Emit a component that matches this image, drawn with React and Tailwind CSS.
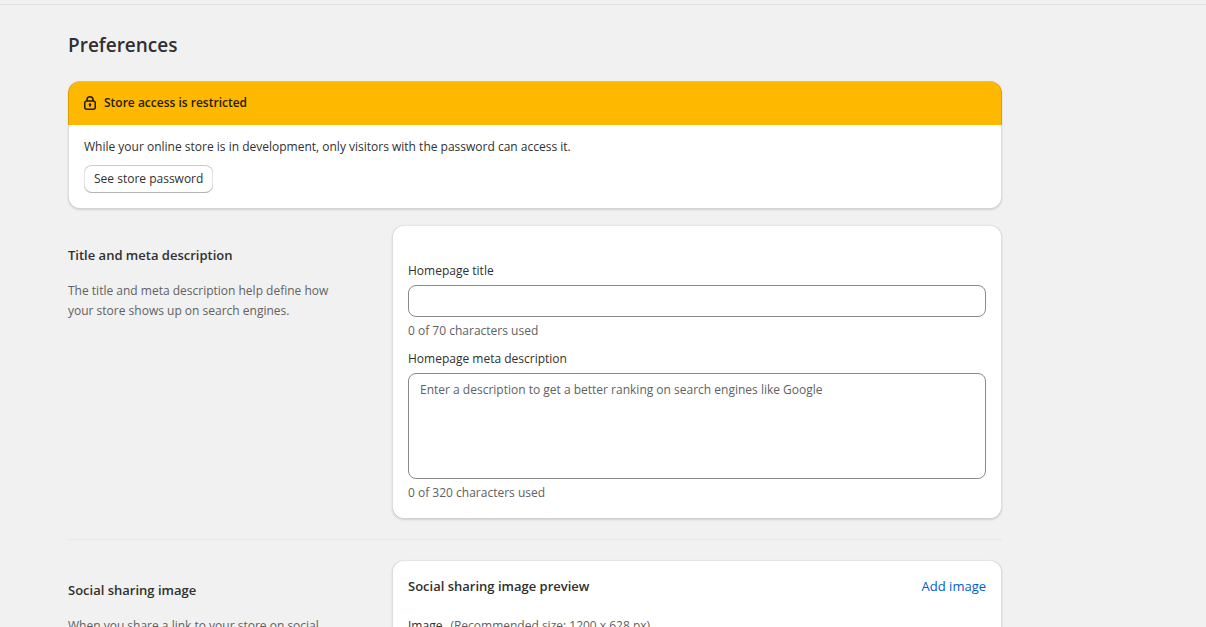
import React from "react";

const TITLE_LIMIT = 70;
const DESCRIPTION_LIMIT = 320;

function LockIcon() {
  return (
    <svg width={12} height={14} viewBox="0 0 12 14" fill="none" aria-hidden="true">
      <path
        d="M3 5V3.75a3 3 0 0 1 6 0V5"
        stroke="currentColor"
        strokeWidth="1.5"
      />
      <rect
        x="0.75"
        y="5"
        width="10.5"
        height="8.25"
        rx="2"
        stroke="currentColor"
        strokeWidth="1.5"
      />
      <circle cx="6" cy="8.6" r="1.3" fill="currentColor" />
      <path d="M6 8.5v2" stroke="currentColor" strokeWidth="1.1" strokeLinecap="round" />
    </svg>
  );
}

function Card({ className = "", children }) {
  return (
    <div
      className={`relative overflow-hidden rounded-xl bg-white shadow-[0_1px_2px_rgba(26,26,26,0.15)] after:pointer-events-none after:absolute after:inset-0 after:rounded-xl after:shadow-[inset_1px_0_0_rgba(0,0,0,0.13),inset_-1px_0_0_rgba(0,0,0,0.13),inset_0_-1px_0_rgba(0,0,0,0.17),inset_0_1px_0_rgba(204,204,204,0.5)] ${className}`}
    >
      {children}
    </div>
  );
}

function Section({ title, description, children }) {
  return (
    <section className="flex gap-4">
      <div className="w-1/3 max-w-[308px] shrink-0 pt-5 pr-8">
        <h2 className="text-[13px] leading-5 font-semibold">{title}</h2>
        <p className="mt-4 text-[#616161]">{description}</p>
      </div>
      <div className="min-w-0 flex-1">{children}</div>
    </section>
  );
}

export default function Preferences() {
  return (
    <div className="h-screen overflow-hidden bg-[#f1f1f1] pt-1 font-['Open_Sans','Noto_Sans',sans-serif] text-xs leading-5 text-[#303030]">
      <div className="border-t border-[#e3e3e3]" />

      <main className="ml-[68px] mr-8 max-w-[934px] pt-7">
        <h1 className="text-[19px] leading-6 font-semibold">Preferences</h1>

        {/* Password banner */}
        <Card className="mt-6">
          <div className="flex h-11 items-center gap-2 bg-[#ffb800] px-4 text-[#251a00]">
            <LockIcon />
            <h2 className="font-semibold">Store access is restricted</h2>
          </div>
          <div className="px-4 pt-3 pb-4">
            <p>
              While your online store is in development, only visitors with the
              password can access it.
            </p>
            <button
              type="button"
              className="mt-2 block h-7 rounded-lg bg-white px-2.5 font-medium shadow-[inset_0_-1px_0_#b5b5b5,inset_0_0_0_1px_rgba(0,0,0,0.1),inset_0_1px_0_#e3e3e3]"
            >
              See store password
            </button>
          </div>
        </Card>

        {/* Title and meta description */}
        <div className="mt-4 border-b border-[#e8e8e8] pb-5">
          <Section
            title="Title and meta description"
            description="The title and meta description help define how your store shows up on search engines."
          >
            <Card className="px-4 pt-9 pb-4">
              <label htmlFor="homepage-title" className="block">
                Homepage title
              </label>
              <input
                id="homepage-title"
                type="text"
                maxLength={TITLE_LIMIT}
                className="mt-1 block h-8 w-full rounded-lg border border-[#8a8a8a] px-3"
              />
              <p className="mt-1 text-[#616161]">0 of {TITLE_LIMIT} characters used</p>

              <label htmlFor="homepage-description" className="mt-2 block">
                Homepage meta description
              </label>
              <textarea
                id="homepage-description"
                maxLength={DESCRIPTION_LIMIT}
                placeholder="Enter a description to get a better ranking on search engines like Google"
                className="mt-1 block h-[106px] w-full resize-none rounded-lg border border-[#8a8a8a] px-[11px] py-1.5 placeholder:text-[#616161]"
              />
              <p className="mt-1 text-[#616161]">
                0 of {DESCRIPTION_LIMIT} characters used
              </p>
            </Card>
          </Section>
        </div>

        {/* Social sharing image */}
        <div className="mt-5">
          <Section
            title="Social sharing image"
            description="When you share a link to your store on social media, an image is usually shown in your post."
          >
            <Card className="px-4 pt-4 pb-4">
              <div className="flex items-center justify-between text-[13px] leading-5">
                <h3 className="font-semibold">Social sharing image preview</h3>
                <button type="button" className="text-[#005bd3]">
                  Add image
                </button>
              </div>
              <p className="mt-5 flex gap-2">
                Image
                <span className="text-[#616161]">
                  (Recommended size: 1200 x 628 px)
                </span>
              </p>
            </Card>
          </Section>
        </div>
      </main>
    </div>
  );
}
